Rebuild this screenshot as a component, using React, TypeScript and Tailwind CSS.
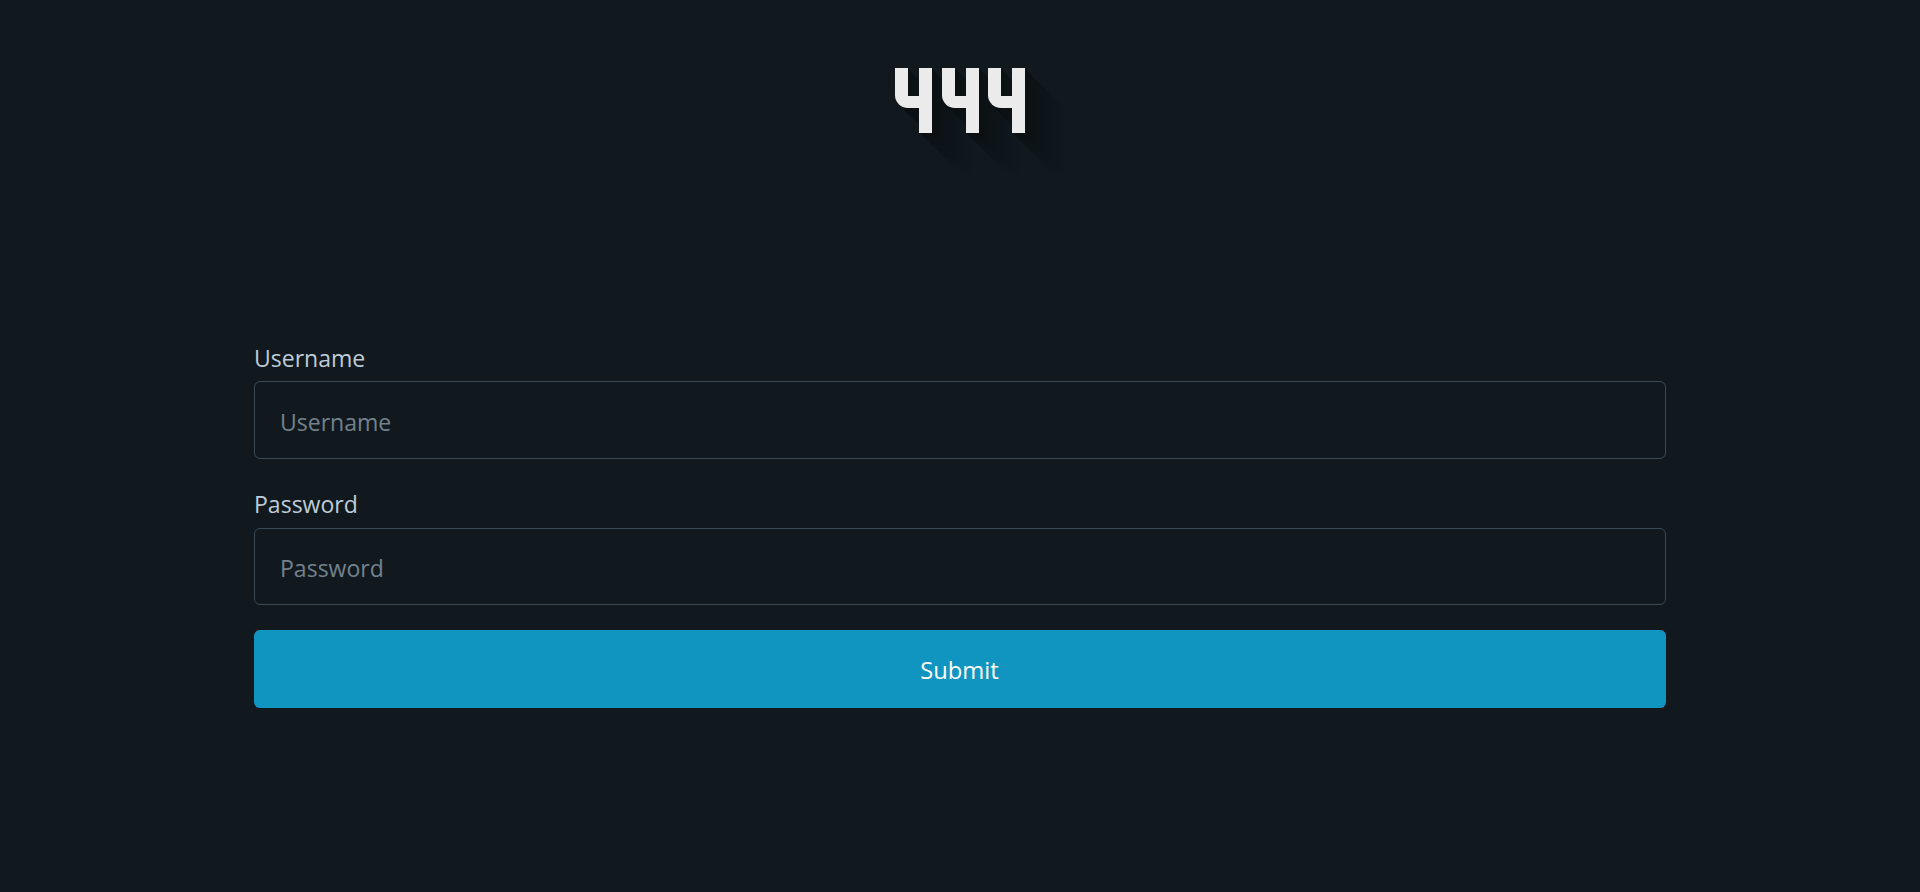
import React from "react";

const SHADOW_LENGTH = 40;
const DIGIT_STARTS = [1, 48, 94];

function Digit({ left }: { left: number }) {
  return (
    <span className="absolute top-0 h-[65px] w-[37px]" style={{ left }}>
      <span className="absolute left-0 top-0 h-[40px] w-[37px] rounded-bl-[13px] border-b-[12px] border-l-[13px] border-current" />
      <span className="absolute right-0 top-0 h-[65px] w-[13px] bg-current" />
    </span>
  );
}

function Layer({ offset, color }: { offset: number; color: string }) {
  return (
    <span
      className="absolute inset-0"
      style={{ transform: `translate(${offset}px, ${offset}px)`, color }}
    >
      {DIGIT_STARTS.map((left) => (
        <Digit key={left} left={left} />
      ))}
    </span>
  );
}

function Logo() {
  const steps = Array.from({ length: SHADOW_LENGTH }, (_, i) => SHADOW_LENGTH - i);
  return (
    <div role="img" aria-label="444" className="relative h-[65px] w-[132px]">
      {steps.map((s) => {
        const t = s / SHADOW_LENGTH;
        const mix = (a: number, b: number) => Math.round(a + (b - a) * t);
        return (
          <Layer key={s} offset={s} color={`rgb(${mix(11, 16)}, ${mix(16, 24)}, ${mix(18, 31)})`} />
        );
      })}
      <Layer offset={0} color="#ebebeb" />
    </div>
  );
}

function Field({ label, type, labelClass, boxClass }: { label: string; type: string; labelClass: string; boxClass: string }) {
  return (
    <label className="block">
      <span className={`${labelClass} block h-[38px] origin-left scale-x-[0.94] leading-[38px]`}>{label}</span>
      <span className={`${boxClass} mt-[6px] block w-full rounded-[6px] border border-[#374956] px-[25px]`}>
        <input
          type={type}
          placeholder={label}
          className="block h-full w-full origin-left scale-x-[0.94] bg-transparent pt-[2px] outline-none placeholder:text-[#73828c] placeholder:opacity-100"
        />
      </span>
    </label>
  );
}

export default function App() {
  return (
    <main className="flex min-h-screen flex-col items-center bg-[#11191f] pt-[68px] font-['Open_Sans','Noto_Sans',sans-serif] text-[24.5px] text-[#bfccd6]">
      <Logo />
      <form className="mt-[204px] w-[1412px]" onSubmit={(e) => e.preventDefault()}>
        <Field label="Username" type="text" labelClass="pt-[2px]" boxClass="h-[78px]" />
        <div className="mt-[25px]">
          <Field label="Password" type="password" labelClass="pt-px" boxClass="h-[77px]" />
        </div>
        <button className="mt-[25px] block h-[78px] w-full rounded-[6px] bg-[#1095c1] pt-[2px] text-white">
          <span className="inline-block scale-x-[0.97]">Submit</span>
        </button>
      </form>
    </main>
  );
}
